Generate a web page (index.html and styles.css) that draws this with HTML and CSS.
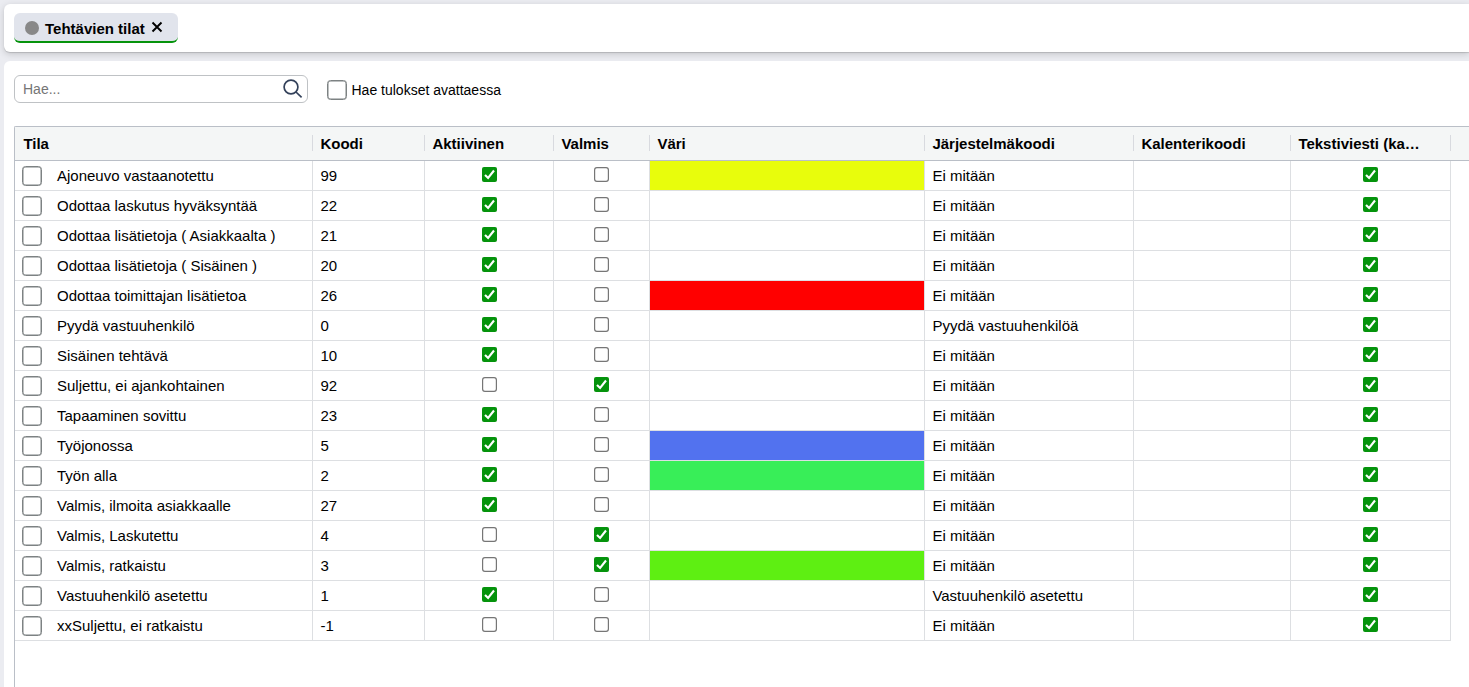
FILE: index.html
```
<!DOCTYPE html>
<html lang="fi">
<head>
<meta charset="utf-8">
<title>Tehtävien tilat</title>
<link rel="stylesheet" href="styles.css">
</head>
<body>
<svg class="defs" width="0" height="0"><symbol id="on" viewBox="0 0 15 15"><rect width="15" height="15" rx="2" fill="#05930c"/><path d="M3 7.9 6.1 11 12 3.5" fill="none" stroke="#fff" stroke-width="2.1"/></symbol><symbol id="off" viewBox="0 0 15 15"><rect x=".6" y=".6" width="13.8" height="13.8" rx="2.3" fill="#fff" stroke="#767676" stroke-width="1.2"/></symbol></svg>
<header class="tabs">
  <div class="tab"><span class="dot"></span><span class="tab-name">Tehtävien tilat</span><svg class="close" viewBox="0 0 12 12"><path d="M1.5 1.5l9 9M10.5 1.5l-9 9" stroke="#000" stroke-width="1.9"/></svg></div>
</header>
<main class="panel">
  <div class="toolbar">
    <div class="search"><span>Hae...</span><svg viewBox="0 0 20 20"><circle cx="8" cy="8" r="6.9"/><path d="M13 13l5.6 5.4"/></svg></div>
    <span class="box"></span><span class="option">Hae tulokset avattaessa</span>
  </div>
  <div class="grid">
    <div class="row head"><div>Tila</div><div>Koodi</div><div>Aktiivinen</div><div>Valmis</div><div>Väri</div><div>Järjestelmäkoodi</div><div>Kalenterikoodi</div><div>Tekstiviesti (ka…</div></div>
    <div class="row"><div><i class="box"></i>Ajoneuvo vastaanotettu</div><div>99</div><div class="c"><svg><use href="#on"/></svg></div><div class="c"><svg><use href="#off"/></svg></div><div class="yellow"></div><div>Ei mitään</div><div></div><div class="c"><svg><use href="#on"/></svg></div></div>
    <div class="row"><div><i class="box"></i>Odottaa laskutus hyväksyntää</div><div>22</div><div class="c"><svg><use href="#on"/></svg></div><div class="c"><svg><use href="#off"/></svg></div><div></div><div>Ei mitään</div><div></div><div class="c"><svg><use href="#on"/></svg></div></div>
    <div class="row"><div><i class="box"></i>Odottaa lisätietoja ( Asiakkaalta )</div><div>21</div><div class="c"><svg><use href="#on"/></svg></div><div class="c"><svg><use href="#off"/></svg></div><div></div><div>Ei mitään</div><div></div><div class="c"><svg><use href="#on"/></svg></div></div>
    <div class="row"><div><i class="box"></i>Odottaa lisätietoja ( Sisäinen )</div><div>20</div><div class="c"><svg><use href="#on"/></svg></div><div class="c"><svg><use href="#off"/></svg></div><div></div><div>Ei mitään</div><div></div><div class="c"><svg><use href="#on"/></svg></div></div>
    <div class="row"><div><i class="box"></i>Odottaa toimittajan lisätietoa</div><div>26</div><div class="c"><svg><use href="#on"/></svg></div><div class="c"><svg><use href="#off"/></svg></div><div class="red"></div><div>Ei mitään</div><div></div><div class="c"><svg><use href="#on"/></svg></div></div>
    <div class="row"><div><i class="box"></i>Pyydä vastuuhenkilö</div><div>0</div><div class="c"><svg><use href="#on"/></svg></div><div class="c"><svg><use href="#off"/></svg></div><div></div><div>Pyydä vastuuhenkilöä</div><div></div><div class="c"><svg><use href="#on"/></svg></div></div>
    <div class="row"><div><i class="box"></i>Sisäinen tehtävä</div><div>10</div><div class="c"><svg><use href="#on"/></svg></div><div class="c"><svg><use href="#off"/></svg></div><div></div><div>Ei mitään</div><div></div><div class="c"><svg><use href="#on"/></svg></div></div>
    <div class="row"><div><i class="box"></i>Suljettu, ei ajankohtainen</div><div>92</div><div class="c"><svg><use href="#off"/></svg></div><div class="c"><svg><use href="#on"/></svg></div><div></div><div>Ei mitään</div><div></div><div class="c"><svg><use href="#on"/></svg></div></div>
    <div class="row"><div><i class="box"></i>Tapaaminen sovittu</div><div>23</div><div class="c"><svg><use href="#on"/></svg></div><div class="c"><svg><use href="#off"/></svg></div><div></div><div>Ei mitään</div><div></div><div class="c"><svg><use href="#on"/></svg></div></div>
    <div class="row"><div><i class="box"></i>Työjonossa</div><div>5</div><div class="c"><svg><use href="#on"/></svg></div><div class="c"><svg><use href="#off"/></svg></div><div class="blue"></div><div>Ei mitään</div><div></div><div class="c"><svg><use href="#on"/></svg></div></div>
    <div class="row"><div><i class="box"></i>Työn alla</div><div>2</div><div class="c"><svg><use href="#on"/></svg></div><div class="c"><svg><use href="#off"/></svg></div><div class="green"></div><div>Ei mitään</div><div></div><div class="c"><svg><use href="#on"/></svg></div></div>
    <div class="row"><div><i class="box"></i>Valmis, ilmoita asiakkaalle</div><div>27</div><div class="c"><svg><use href="#on"/></svg></div><div class="c"><svg><use href="#off"/></svg></div><div></div><div>Ei mitään</div><div></div><div class="c"><svg><use href="#on"/></svg></div></div>
    <div class="row"><div><i class="box"></i>Valmis, Laskutettu</div><div>4</div><div class="c"><svg><use href="#off"/></svg></div><div class="c"><svg><use href="#on"/></svg></div><div></div><div>Ei mitään</div><div></div><div class="c"><svg><use href="#on"/></svg></div></div>
    <div class="row"><div><i class="box"></i>Valmis, ratkaistu</div><div>3</div><div class="c"><svg><use href="#off"/></svg></div><div class="c"><svg><use href="#on"/></svg></div><div class="lime"></div><div>Ei mitään</div><div></div><div class="c"><svg><use href="#on"/></svg></div></div>
    <div class="row"><div><i class="box"></i>Vastuuhenkilö asetettu</div><div>1</div><div class="c"><svg><use href="#on"/></svg></div><div class="c"><svg><use href="#off"/></svg></div><div></div><div>Vastuuhenkilö asetettu</div><div></div><div class="c"><svg><use href="#on"/></svg></div></div>
    <div class="row"><div><i class="box"></i>xxSuljettu, ei ratkaistu</div><div>-1</div><div class="c"><svg><use href="#off"/></svg></div><div class="c"><svg><use href="#off"/></svg></div><div></div><div>Ei mitään</div><div></div><div class="c"><svg><use href="#on"/></svg></div></div>
  </div>
</main>
</body>
</html>
```
FILE: styles.css
```
* { box-sizing: border-box; }
body {
  margin: 0;
  height: 687px;
  padding: 4px 0 0 4px;
  display: flex;
  flex-direction: column;
  gap: 9px;
  overflow: hidden;
  background: #ebecf1;
  color: #000;
  font: 15px "Liberation Sans", Arial, sans-serif;
}
.defs { display: none; }
.tabs {
  flex: none;
  height: 48px;
  padding: 9px 10px;
  background: #fff;
  border-radius: 6px 0 0 6px;
  box-shadow: 0 2px 7px rgba(0, 0, 0, .17), 0 1px 1px rgba(0, 0, 0, .14);
}
.tab {
  display: flex;
  align-items: center;
  width: 164px;
  height: 30px;
  padding: 2px 0 0 11px;
  background: #e1e4ec;
  border-bottom: 2px solid #05930c;
  border-radius: 6px;
}
.dot { width: 14px; height: 14px; margin-right: 6px; border-radius: 50%; background: #888; }
.tab-name { width: 106px; margin-top: 1px; font-weight: bold; font-size: 15px; white-space: nowrap; }
.close { width: 12px; height: 12px; margin-top: -2px; }
.panel {
  position: relative;
  flex: 1;
  padding: 14px 0 0 10px;
  display: flex;
  flex-direction: column;
  background: #fff;
  border-radius: 6px 0 0 0;
}
.toolbar { display: flex; align-items: center; height: 28px; margin-bottom: 23px; }
.search {
  display: flex;
  justify-content: space-between;
  align-items: center;
  width: 294px;
  height: 28px;
  margin-right: 19px;
  padding: 0 4px 0 8px;
  border: 1px solid #bfc2c5;
  border-radius: 6px;
  color: #757575;
  font-size: 14px;
}
.search svg { width: 20px; height: 20px; fill: none; stroke: #33415a; stroke-width: 1.7; }
.box {
  flex: none;
  width: 20px;
  height: 20px;
  border: 1px solid #7d8283;
  border-radius: 3.5px;
  box-shadow: inset 0 0 0 .5px #7d8283;
  background: #fff;
}
.toolbar .box { margin-top: 2px; }
.option { margin: 2px 0 0 4.5px; font-size: 14px; }
.grid { flex: 1; border: solid #babfc7; border-width: 1px 0 0 1px; border-top-left-radius: 2px; }
.row {
  display: grid;
  grid-template-columns: 298px 112px 129px 96px 275px 209px 157px 160px;
  width: 1436px;
  height: 30px;
}
.row > div {
  display: flex;
  align-items: center;
  padding: 0 0 1px 7.4px;
  border: solid #dddfe2;
  border-width: 0 1px 1px 0;
  white-space: nowrap;
}
.row .box { margin: 2px 14.6px 0 0; }
.row .c { padding: 0 0 2px; justify-content: center; }
.c svg { width: 15px; height: 15px; }
.row.head { width: auto; height: 34px; background: #f4f6f6; border-bottom: 1px solid #babfc7; font-weight: bold; }
.row.head > div {
  height: 18px;
  margin-top: 7px;
  padding: 0 0 0 7.4px;
  border: 0;
  background: linear-gradient(#d8dadf, #d8dadf) right center / 1px 16px no-repeat;
}
.row.head > div:first-child { padding-left: 8.4px; }
.row > .yellow { background: #e8fd0c; }
.row > .red { background: #f00; }
.row > .blue { background: #5272ef; }
.row > .green { background: #38ee58; }
.row > .lime { background: #5eef12; }
```
